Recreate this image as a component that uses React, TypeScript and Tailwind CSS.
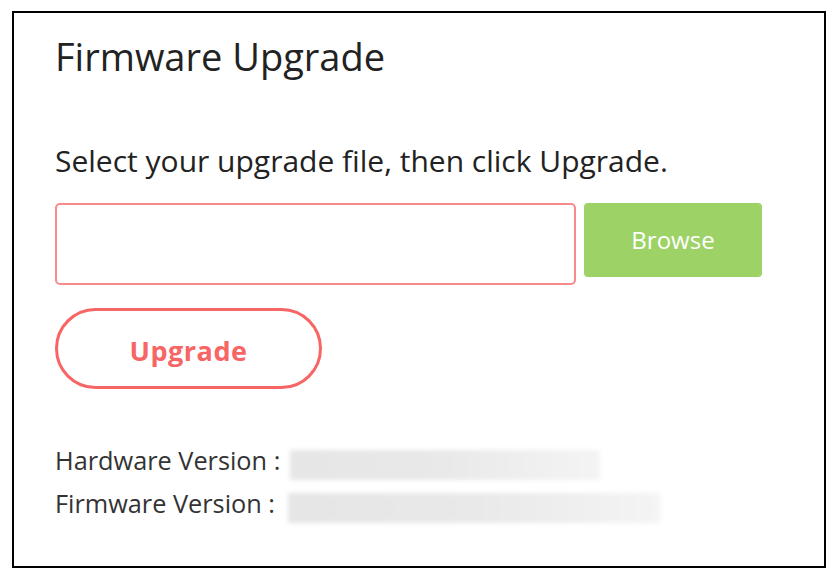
import React from 'react';

const font = { fontFamily: '"Open Sans", "Noto Sans", sans-serif' };

export default function App() {
  return (
    <div className="w-[840px] h-[584px] bg-white pt-[11px] pl-[12px]" style={font}>
      <div className="w-[814px] h-[557px] border-2 border-black flex flex-col pl-[41px] pt-[18px]">
        <h1 className="text-[38px] leading-[50px] text-[#222] font-normal">Firmware Upgrade</h1>

        <p className="mt-[60px] text-[30px] leading-[40px] text-[#222]">
          Select your upgrade file, then click Upgrade.
        </p>

        <div className="mt-[22px] flex items-start gap-[8px]">
          <input
            type="text"
            className="w-[521px] h-[82px] border-2 border-[#f78a8a] rounded-[5px] outline-none px-3"
          />
          <button className="w-[178px] h-[74px] bg-[#9dd366] rounded-[4px] text-white text-[24px]">
            Browse
          </button>
        </div>

        <button className="mt-[23px] w-[267px] h-[81px] pt-[5px] border-[3px] border-[#f76565] rounded-full text-[#f76565] text-[27px] font-bold tracking-[0.5px]">
          Upgrade
        </button>

        <div className="mt-[50px] flex flex-col text-[25.3px] leading-[43px] text-[#333]">
          <div className="flex items-start">
            <span>Hardware Version :</span>
            <div className="mt-[11px] ml-[10px] w-[310px] h-[30px] bg-gradient-to-r from-[#e6e6e6] via-[#e9e9e9] to-[#f4f4f4] blur-[2px]" />
          </div>
          <div className="flex items-start">
            <span>Firmware Version :</span>
            <div className="mt-[11px] ml-[13px] w-[372px] h-[30px] bg-gradient-to-r from-[#e6e6e6] via-[#e9e9e9] to-[#f4f4f4] blur-[2px]" />
          </div>
        </div>
      </div>
    </div>
  );
}
